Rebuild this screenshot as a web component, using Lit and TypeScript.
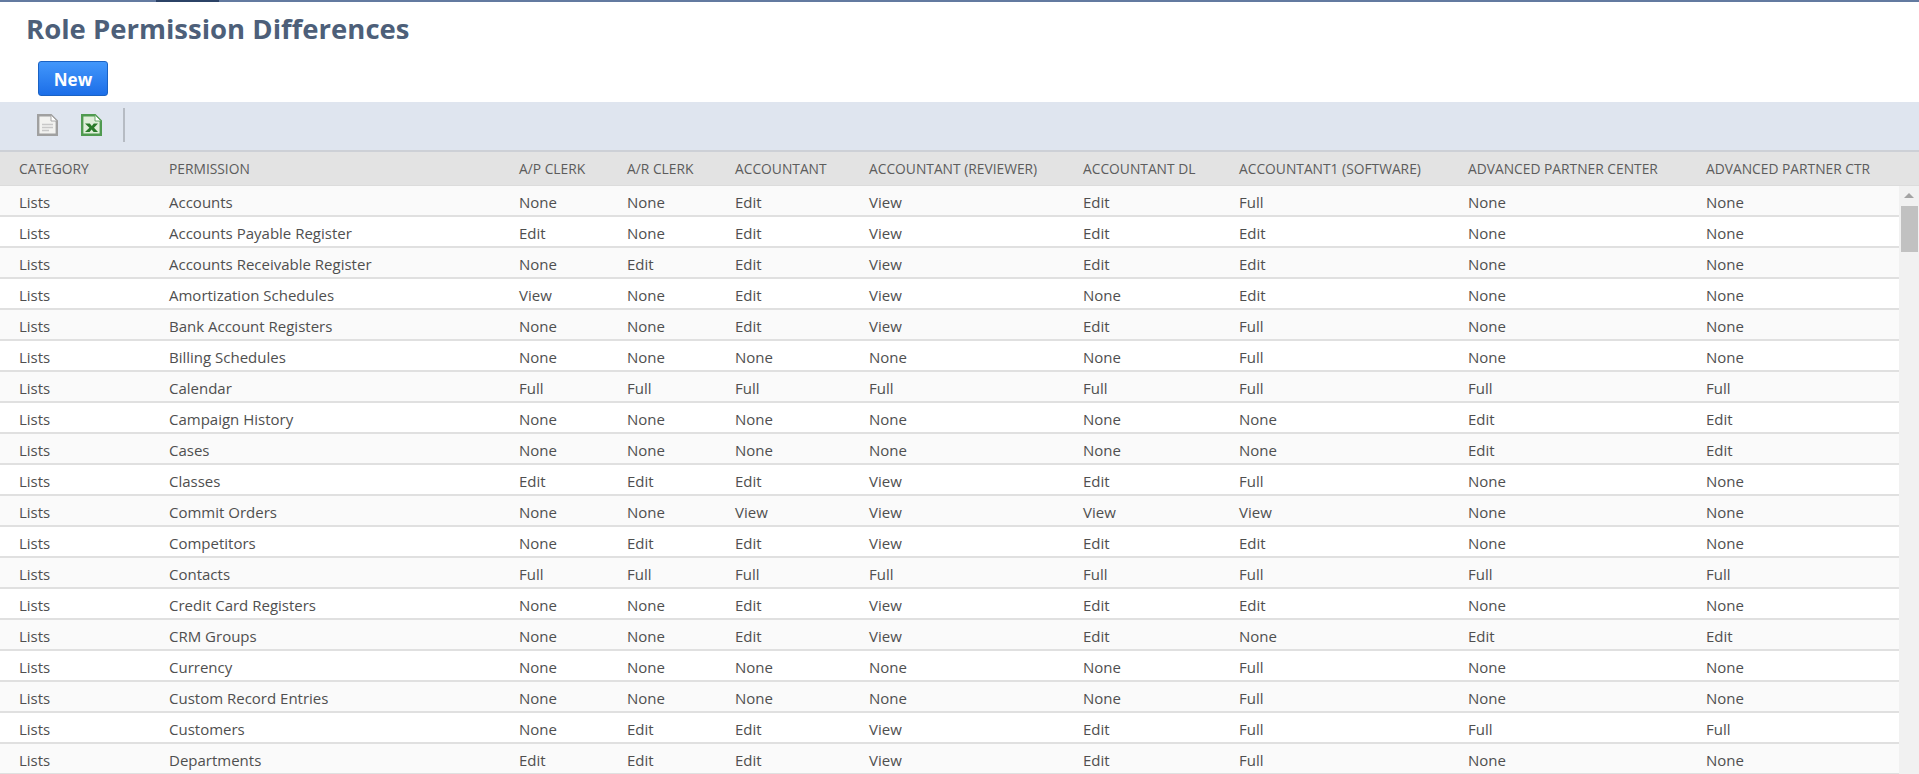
import { LitElement, html, css, svg } from "lit";
import { customElement } from "lit/decorators.js";

const N = "None", E = "Edit", V = "View", F = "Full";
const COLS = ["CATEGORY","PERMISSION","A/P CLERK","A/R CLERK","ACCOUNTANT","ACCOUNTANT (REVIEWER)","ACCOUNTANT DL","ACCOUNTANT1 (SOFTWARE)","ADVANCED PARTNER CENTER","ADVANCED PARTNER CTR"];
const ROWS: string[][] = [
  ["Accounts",N,N,E,V,E,F,N,N],
  ["Accounts Payable Register",E,N,E,V,E,E,N,N],
  ["Accounts Receivable Register",N,E,E,V,E,E,N,N],
  ["Amortization Schedules",V,N,E,V,N,E,N,N],
  ["Bank Account Registers",N,N,E,V,E,F,N,N],
  ["Billing Schedules",N,N,N,N,N,F,N,N],
  ["Calendar",F,F,F,F,F,F,F,F],
  ["Campaign History",N,N,N,N,N,N,E,E],
  ["Cases",N,N,N,N,N,N,E,E],
  ["Classes",E,E,E,V,E,F,N,N],
  ["Commit Orders",N,N,V,V,V,V,N,N],
  ["Competitors",N,E,E,V,E,E,N,N],
  ["Contacts",F,F,F,F,F,F,F,F],
  ["Credit Card Registers",N,N,E,V,E,E,N,N],
  ["CRM Groups",N,N,E,V,E,N,E,E],
  ["Currency",N,N,N,N,N,F,N,N],
  ["Custom Record Entries",N,N,N,N,N,F,N,N],
  ["Customers",N,E,E,V,E,F,F,F],
  ["Departments",E,E,E,V,E,F,N,N],
];

const docIcon = svg`<svg width="21" height="22" viewBox="0 0 21 22">
  <path d="M1.2 1.2H14L19.8 7V20.8H1.2Z" fill="#f2f2f0" stroke="#a0a0a0" stroke-width="2.4"/>
  <path d="M14 1V7H20Z" fill="#fff" stroke="#a8a8a8" stroke-width="1"/>
  <path d="M5 10.5H16M5 13.5H16M5 16.5H12" stroke="#c8c8c8" stroke-width="1.3" fill="none"/>
</svg>`;
const xlsIcon = svg`<svg width="21" height="22" viewBox="0 0 21 22">
  <path d="M1.2 1.2H14L19.8 7V20.8H1.2Z" fill="#dfeeda" stroke="#4f9a50" stroke-width="2.4"/>
  <path d="M14 1V7H20Z" fill="#fff" stroke="#6aa96a" stroke-width="1"/>
  <path d="M4 9.5H8.8L10.8 12L12.8 9.5H17L13 13.8L17 18H12.6L10.6 15.6L8.6 18H4L8.4 13.8Z" fill="#2a7a2a"/>
</svg>`;

@customElement("app-root")
export class AppRoot extends LitElement {
  static styles = css`
    :host { display: block; width: 1919px; height: 774px; overflow: hidden; background: #fff;
      font-family: "Open Sans", "Noto Sans", sans-serif; color: #4a4a4a; }
    .top { display: flex; height: 2px; background: #637aa0; }
    .top .seg { width: 63px; margin-left: 156px; background: #2b4266; }
    h1 { margin: 0; padding: 6px 0 0 26px; height: 48px; box-sizing: border-box; font-size: 27.5px; line-height: 42px;
      font-weight: 700; color: #4d5f79; white-space: nowrap; }
    .actions { height: 52px; box-sizing: border-box; padding: 11px 0 0 38px; }
    .new { display: block; box-sizing: border-box; width: 70px; height: 35px; padding: 0; border: 1px solid #1a62c4; border-radius: 3px;
      background: linear-gradient(#4297fb, #1c6ee8); color: #fff; font: 700 17px/35px "Open Sans", sans-serif; text-align: center; }
    .toolbar { display: flex; align-items: center; height: 50px; box-sizing: border-box; background: #dfe5ef;
      border-bottom: 2px solid #cdd0d6; padding: 0 0 2px 37px; }
    .toolbar svg { display: block; }
    .toolbar .ic + .ic { margin-left: 23px; }
    .sep { width: 2px; height: 34px; background: #b6bbc3; margin-left: 21px; }
    .head, .row { display: grid; grid-template-columns: 150px 350px 108px 108px 134px 214px 156px 229px 238px 1fr; padding-left: 19px; white-space: nowrap; }
    .head { height: 34px; box-sizing: border-box; background: #e3e3e3; border-bottom: 1px solid #dcdcdc; font-size: 13.8px; line-height: 34px; color: #5c5c5c; }
    .body { display: flex; }
    .rows { flex: 1; min-width: 0; }
    .row { height: 31px; box-sizing: border-box; border-bottom: 2px solid #e0e0e0; font-size: 15px; line-height: 32px; color: #4f4f4f; background: #fff; }
    .row:nth-child(odd) { background: #fafafa; }
    .scroll { width: 20px; flex: none; background: #f1f1f1; height: 590px; }
    .arrow { width: 0; height: 0; margin: 7px 0 0 5px; border: 5px solid transparent; border-top: 0; border-bottom: 5px solid #a3a3a3; }
    .thumb { width: 17px; height: 46px; margin: 8px 0 0 2px; background: #c1c1c1; }
  `;
  render() {
    return html`
      <div class="top"><div class="seg"></div></div>
      <h1>Role Permission Differences</h1>
      <div class="actions"><button class="new">New</button></div>
      <div class="toolbar">
        <span class="ic">${docIcon}</span><span class="ic">${xlsIcon}</span><div class="sep"></div>
      </div>
      <div class="head">${COLS.map((c) => html`<div>${c}</div>`)}</div>
      <div class="body">
        <div class="rows">
          ${ROWS.map((r) => html`<div class="row"><div>Lists</div>${r.map((c) => html`<div>${c}</div>`)}</div>`)}
        </div>
        <div class="scroll"><div class="arrow"></div><div class="thumb"></div></div>
      </div>
    `;
  }
}
